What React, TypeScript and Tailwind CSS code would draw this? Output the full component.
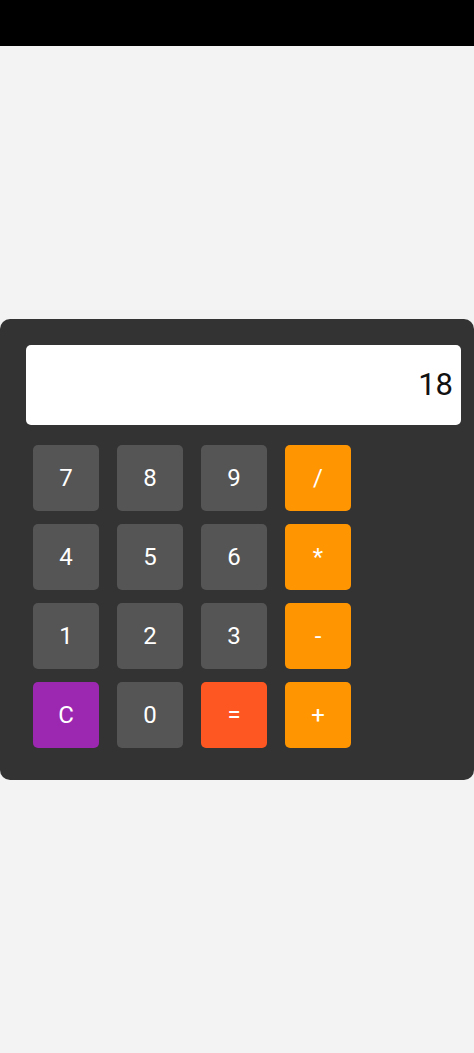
const keys: { label: string; tone: "num" | "op" | "clear" | "eq" }[] = [
  { label: "7", tone: "num" },
  { label: "8", tone: "num" },
  { label: "9", tone: "num" },
  { label: "/", tone: "op" },
  { label: "4", tone: "num" },
  { label: "5", tone: "num" },
  { label: "6", tone: "num" },
  { label: "*", tone: "op" },
  { label: "1", tone: "num" },
  { label: "2", tone: "num" },
  { label: "3", tone: "num" },
  { label: "-", tone: "op" },
  { label: "C", tone: "clear" },
  { label: "0", tone: "num" },
  { label: "=", tone: "eq" },
  { label: "+", tone: "op" },
];

const toneClass = {
  num: "bg-[#555555]",
  op: "bg-[#ff9500]",
  clear: "bg-[#9c27b0]",
  eq: "bg-[#ff5722]",
};

export default function App() {
  return (
    <div
      className="min-h-[1053px] bg-[#f3f3f3] flex flex-col"
      style={{ fontFamily: "Roboto, 'Noto Sans', sans-serif" }}
    >
      <div className="h-[46px] bg-black" />
      <div className="flex-1 flex items-center">
        <div className="w-[474px] bg-[#333333] rounded-[10px] pt-[26px] pb-[32px] pl-[26px] pr-[13px]">
          <div className="h-[80px] bg-white rounded-[5px] flex items-center justify-end pr-[8px] text-[31px] text-[#111]">
            18
          </div>
          <div className="mt-[20px] ml-[7px] grid grid-cols-[repeat(4,66px)] gap-x-[18px] gap-y-[13px]">
            {keys.map((k) => (
              <button
                key={k.label}
                className={`${toneClass[k.tone]} h-[66px] w-[66px] rounded-[5px] text-white text-[24px] flex items-center justify-center`}
              >
                {k.label}
              </button>
            ))}
          </div>
        </div>
      </div>
    </div>
  );
}
